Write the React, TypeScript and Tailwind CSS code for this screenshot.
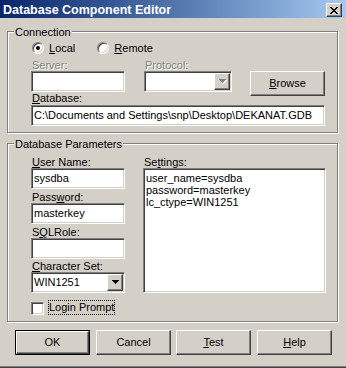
import React from "react";

const sunken =
  "bg-white border border-t-[#808080] border-l-[#808080] border-b-white border-r-white shadow-[inset_1px_1px_0_#404040,inset_-1px_-1px_0_#d4d0c8]";
const raised =
  "bg-[#d4d0c8] border border-t-white border-l-white border-b-[#404040] border-r-[#404040] shadow-[inset_-1px_-1px_0_#808080]";
const etched =
  "border border-[#808080] shadow-[inset_1px_1px_0_#fff,1px_1px_0_#fff]";
const disabledText = "text-[#808080] [text-shadow:1px_1px_0_#fff]";

const Arrow = ({ disabled }: { disabled?: boolean }) => (
  <svg width="8" height="5" viewBox="0 0 8 5" shapeRendering="crispEdges">
    {disabled && (
      <g fill="#fff" transform="translate(1,1)">
        <rect x="0" y="0" width="7" height="1" />
        <rect x="1" y="1" width="5" height="1" />
        <rect x="2" y="2" width="3" height="1" />
        <rect x="3" y="3" width="1" height="1" />
      </g>
    )}
    <g fill={disabled ? "#808080" : "#000"}>
      <rect x="0" y="0" width="7" height="1" />
      <rect x="1" y="1" width="5" height="1" />
      <rect x="2" y="2" width="3" height="1" />
      <rect x="3" y="3" width="1" height="1" />
    </g>
  </svg>
);

const CloseGlyph = () => (
  <svg width="8" height="7" viewBox="0 0 8 7" shapeRendering="crispEdges" fill="#000">
    <rect x="0" y="0" width="2" height="1" />
    <rect x="6" y="0" width="2" height="1" />
    <rect x="1" y="1" width="2" height="1" />
    <rect x="5" y="1" width="2" height="1" />
    <rect x="2" y="2" width="4" height="1" />
    <rect x="3" y="3" width="2" height="1" />
    <rect x="2" y="4" width="4" height="1" />
    <rect x="1" y="5" width="2" height="1" />
    <rect x="5" y="5" width="2" height="1" />
    <rect x="0" y="6" width="2" height="1" />
    <rect x="6" y="6" width="2" height="1" />
  </svg>
);

const Radio = ({ checked }: { checked?: boolean }) => (
  <div className="w-[12px] h-[12px] rounded-full bg-white border border-t-[#808080] border-l-[#808080] border-b-white border-r-white shadow-[inset_1px_1px_0_#404040,inset_-1px_-1px_0_#d4d0c8] flex items-center justify-center">
    {checked && <div className="w-[4px] h-[4px] rounded-full bg-black" />}
  </div>
);

const Edit = ({ value, w }: { value?: string; w: string }) => (
  <div className={`${sunken} ${w} h-[21px] flex items-center pl-[2px] whitespace-nowrap`}>
    {value}
  </div>
);

const Combo = ({ value, w, disabled }: { value?: string; w: string; disabled?: boolean }) => (
  <div className={`${sunken} ${w} h-[21px] flex p-[1px]`}>
    <div className="flex-1 pl-[1px] leading-[17px]">{value}</div>
    <div className={`${raised} w-[16px] h-[17px] flex items-center justify-center pl-[1px]`}>
      <Arrow disabled={disabled} />
    </div>
  </div>
);

const Button = ({ children, w = "w-[75px]", def }: { children: React.ReactNode; w?: string; def?: boolean }) =>
  def ? (
    <div className={`${w} h-[25px] border border-black flex`}>
      <div className={`${raised} flex-1 flex items-center justify-center`}>{children}</div>
    </div>
  ) : (
    <div className={`${raised} ${w} h-[25px] flex items-center justify-center`}>{children}</div>
  );

const Label = ({ children, className = "" }: { children: React.ReactNode; className?: string }) => (
  <div className={`h-[12px] leading-[12px] pl-px whitespace-nowrap ${className}`}>{children}</div>
);

export default function App() {
  return (
    <div className="w-[346px] h-[368px] bg-[#d4d0c8] flex flex-col font-['Liberation_Sans',Arial,sans-serif] text-[11px] leading-[13px] text-black border-b border-b-[#404040] shadow-[inset_0_-1px_0_#808080] overflow-hidden">
      {/* title bar */}
      <div className="h-[18px] flex items-start bg-linear-to-r from-[#0a246a] to-[#a6caf0]">
        <span className="mt-[3px] ml-[3px] leading-[14px] text-[12.5px] font-bold text-white">
          Database Component Editor
        </span>
        <div className={`${raised} ml-auto mt-[3px] mr-[4px] w-[16px] h-[14px] flex items-center justify-center`}>
          <CloseGlyph />
        </div>
      </div>

      <div className="px-[7px] flex flex-col">
        {/* Connection */}
        <div className={`${etched} mt-[13px] w-[331px] h-[102px] flex flex-col`}>
          <span className="self-start -mt-[6px] ml-[6px] px-[1px] bg-[#d4d0c8]">Connection</span>
          <div className="pl-[23px] flex flex-col">
            <div className="mt-[3px] ml-px flex items-start h-[13px]">
              <Radio checked />
              <span className="ml-[5px]">
                <u>L</u>ocal
              </span>
              <div className="ml-[22px]">
                <Radio />
              </div>
              <span className="ml-[5px]">
                <u>R</u>emote
              </span>
            </div>
            <div className="mt-[4px] flex">
              <Label className={`w-[113px] ${disabledText}`}>Server:</Label>
              <Label className={disabledText}>Protocol:</Label>
            </div>
            <div className="h-[21px] flex items-start">
              <Edit w="w-[94px]" />
              <div className="ml-[19px]">
                <Combo w="w-[88px]" disabled />
              </div>
              <div className="ml-[18px]">
                <Button>
                  <span>
                    <u>B</u>rowse
                  </span>
                </Button>
              </div>
            </div>
            <div className="h-[13px] pl-px">
              <u>D</u>atabase:
            </div>
            <Edit w="w-[294px]" value="C:\Documents and Settings\snp\Desktop\DEKANAT.GDB" />
          </div>
        </div>

        {/* Database Parameters */}
        <div className={`${etched} mt-[10px] w-[331px] h-[179px] flex flex-col`}>
          <span className="self-start -mt-[6px] ml-[6px] px-[1px] bg-[#d4d0c8]">Database Parameters</span>
          <div className="pl-[23px] mt-[5px] flex items-start">
            <div className="w-[94px] flex flex-col">
              <Label>
                <u>U</u>ser Name:
              </Label>
              <Edit w="w-[94px]" value="sysdba" />
              <Label className="mt-[2px]">
                Pass<u>w</u>ord:
              </Label>
              <Edit w="w-[94px]" value="masterkey" />
              <Label className="mt-[2px]">
                S<u>Q</u>LRole:
              </Label>
              <Edit w="w-[94px]" />
              <Label className="mt-[1px]">
                <u>C</u>haracter Set:
              </Label>
              <Combo w="w-[94px]" value="WIN1251" />
              <div className="mt-[7px] flex items-end">
                <div className={`${sunken} w-[13px] h-[13px]`} />
                <span className="ml-[4px] border border-dotted border-black leading-[13px]">Login Prompt</span>
              </div>
            </div>
            <div className="ml-[18px] w-[183px] flex flex-col">
              <Label>
                Se<u>t</u>tings:
              </Label>
              <div className={`${sunken} h-[125px] pl-[2px] pt-[3px] leading-[12px]`}>
                <div>user_name=sysdba</div>
                <div>password=masterkey</div>
                <div>lc_ctype=WIN1251</div>
              </div>
            </div>
          </div>
        </div>

        {/* buttons */}
        <div className="mt-[8px] ml-[8px] flex">
          <Button def>OK</Button>
          <div className="ml-[6px]">
            <Button>Cancel</Button>
          </div>
          <div className="ml-[5px]">
            <Button>
              <span>
                <u>T</u>est
              </span>
            </Button>
          </div>
          <div className="ml-[6px]">
            <Button>
              <span>
                <u>H</u>elp
              </span>
            </Button>
          </div>
        </div>
      </div>
    </div>
  );
}
